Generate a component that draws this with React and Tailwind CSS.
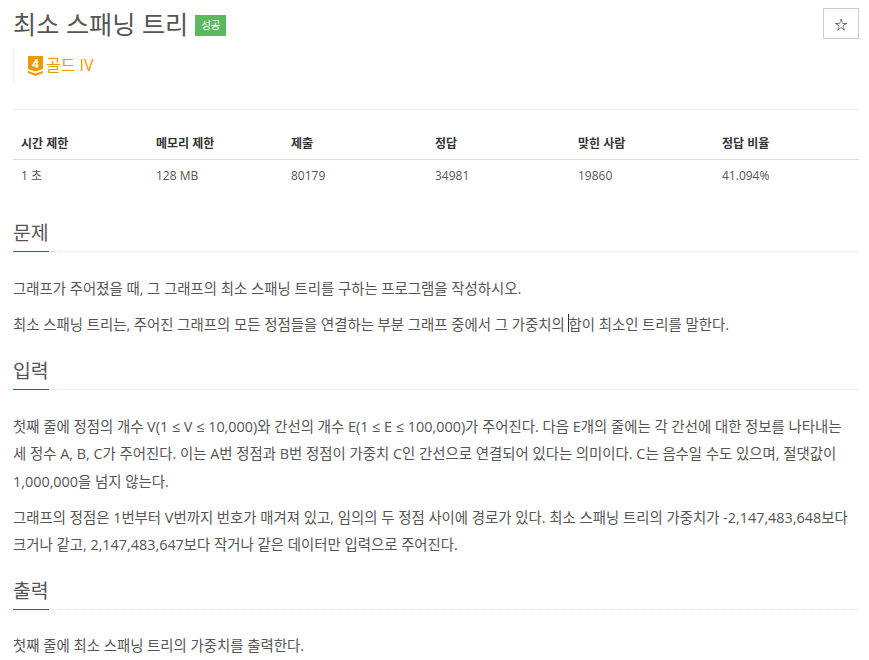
import React from "react";

const font = "font-['Open_Sans','Noto_Sans_CJK_KR',sans-serif]";

const headers = ["시간 제한", "메모리 제한", "제출", "정답", "맞힌 사람", "정답 비율"];
const values = ["1 초", "128 MB", "80179", "34981", "19860", "41.094%"];
const colWidths = ["w-[136px]", "w-[135px]", "w-[144px]", "w-[143px]", "w-[144px]", "w-[144px]"];

function Section({ title, children }) {
  return (
    <section>
      <div className="border-b border-dotted border-[#e4e6eb] h-[32px]">
        <h2 className="inline-block h-[32px] border-b border-[#0b6fb0] text-[19.4px] leading-[26px] text-[#555]">{title}</h2>
      </div>
      <div className="pt-[22.5px] pr-[3px] leading-[27.5px] space-y-[8.5px]">{children}</div>
    </section>
  );
}

function TierBadge() {
  return (
    <svg width="15" height="20" viewBox="0 0 15 20" className="shrink-0">
      <path d="M0 0H15V13L7.5 15.5L0 13Z" fill="#ec9a00" />
      <path d="M0 15L7.5 17.5L15 15V17L7.5 20L0 17Z" fill="#ec9a00" />
      <text x="7.5" y="11.5" textAnchor="middle" fontSize="12" fontWeight="700" fill="#fff" fontFamily="Open Sans">4</text>
    </svg>
  );
}

export default function App() {
  return (
    <div className={`${font} bg-white h-[660px] overflow-hidden pl-[13px] pr-[10px] text-[14.4px] text-[#555]`}>
      <div className="flex items-start justify-between h-[44px]">
        <div className="flex items-center pt-[6px]">
          <h1 className="text-[25.2px] leading-[36px] text-[#555]">최소 스패닝 트리</h1>
          <span className="ml-[7px] mt-[3px] bg-[#5cb85c] text-white text-[10.5px] leading-[21px] h-[21px] w-[31px] text-center">성공</span>
        </div>
        <button className="mt-[8px] w-[36px] h-[31px] border border-[#ccc] bg-white text-[#222] text-[13px] leading-none font-['Noto_Sans_CJK_KR',sans-serif]">☆</button>
      </div>
      <div className="mt-[4px] h-[35px] border-l border-[#eee] pl-[14px] flex items-center gap-[3px] text-[16px] text-[#ec9a00]">
        <TierBadge />
        <span className="-mt-[2px]">골드 IV</span>
      </div>
      <div className="mt-[26px] border-t border-[#eee]" />
      <table className="mt-[19px] w-[846px] table-fixed border-collapse">
        <thead>
          <tr className="border-b border-[#ddd]">
            {headers.map((h, i) => (
              <th key={h} className={`${colWidths[i]} pr-[7px] ${i === 0 ? "pl-[8px]" : "pl-[7px]"} h-[30px] text-left text-[12px] font-bold text-[#333]`}>{h}</th>
            ))}
          </tr>
        </thead>
        <tbody>
          <tr>
            {values.map((v, i) => (
              <td key={v} className={`pr-[7px] ${i === 0 ? "pl-[8px]" : "pl-[7px]"} h-[33px] text-[12px] text-[#555]`}>{v}</td>
            ))}
          </tr>
        </tbody>
      </table>

      <div className="mt-[28px]">
        <Section title="문제">
          <p>그래프가 주어졌을 때, 그 그래프의 최소 스패닝 트리를 구하는 프로그램을 작성하시오.</p>
          <p>
            최소 스패닝 트리는, 주어진 그래프의 모든 정점들을 연결하는 부분 그래프 중에서 그 가중치의{" "}
            <span className="relative">
              <span className="absolute left-0 -top-[1px] w-px h-[18px] bg-[#333]" />
            </span>
            합이 최소인 트리를 말한다.
          </p>
        </Section>
      </div>

      <div className="mt-[20px]">
        <Section title="입력">
          <p>첫째 줄에 정점의 개수 V(1 ≤ V ≤ 10,000)와 간선의 개수 E(1 ≤ E ≤ 100,000)가 주어진다. 다음 E개의 줄에는 각 간선에 대한 정보를 나타내는 세 정수 A, B, C가 주어진다. 이는 A번 정점과 B번 정점이 가중치 C인 간선으로 연결되어 있다는 의미이다. C는 음수일 수도 있으며, 절댓값이 1,000,000을 넘지 않는다.</p>
          <p>그래프의 정점은 1번부터 V번까지 번호가 매겨져 있고, 임의의 두 정점 사이에 경로가 있다. 최소 스패닝 트리의 가중치가 -2,147,483,648보다 크거나 같고, 2,147,483,647보다 작거나 같은 데이터만 입력으로 주어진다.</p>
        </Section>
      </div>

      <div className="mt-[19px]">
        <Section title="출력">
          <p>첫째 줄에 최소 스패닝 트리의 가중치를 출력한다.</p>
        </Section>
      </div>
    </div>
  );
}
